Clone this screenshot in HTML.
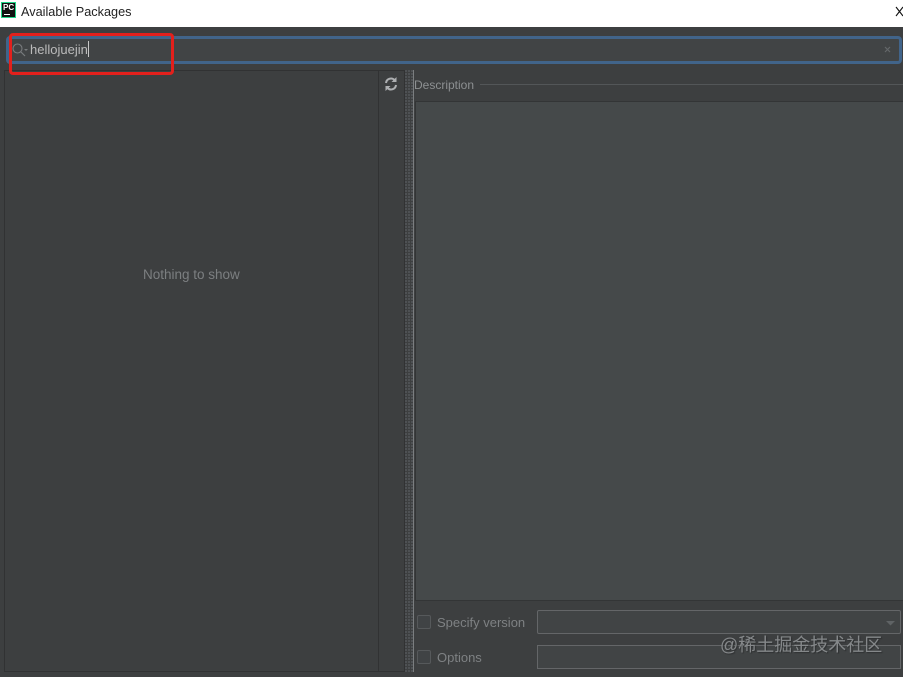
<!DOCTYPE html>
<html>
<head>
<meta charset="utf-8">
<style>
html,body{margin:0;padding:0;}
body{width:903px;height:677px;position:relative;overflow:hidden;background:#3d3f40;font-family:"Liberation Sans","Noto Sans CJK SC",sans-serif;}
div{position:absolute;box-sizing:border-box;}
svg{position:absolute;overflow:visible;}
.t{white-space:nowrap;color:#8a8d8f;font-size:13px;line-height:16px;}
#w{left:0;top:0;width:903px;height:677px;filter:blur(.35px);}
</style>
</head>
<body>
<div id="w">
<!-- title bar -->
<div style="left:0;top:0;width:903px;height:27px;background:#fff"></div>
<div style="left:1px;top:2px;width:15px;height:16px;background:#111;border:1px solid #21d789"></div>
<div style="left:3px;top:3px;font:bold 8px/9px 'Liberation Sans',sans-serif;color:#fff">PC</div>
<div style="left:4px;top:14px;width:6px;height:1px;background:#fff"></div>
<div class="t" style="left:21px;top:4px;color:#222;font-size:12.700px">Available Packages</div>
<svg style="left:0;top:0" width="903" height="27"><path d="M896 7l7 9M903 7l-7 9" stroke="#111" stroke-width="1.100" fill="none"/></svg>

<!-- search field -->
<div style="left:6px;top:36px;width:896px;height:28px;background:#414445;border:3px solid #41648a;border-radius:4px"></div>
<svg style="left:0;top:0" width="40" height="60"><circle cx="17.500" cy="48.500" r="4.500" stroke="#787b7d" stroke-width="1.100" fill="none"/><path d="M21 52l4 4" stroke="#787b7d" stroke-width="1.200"/><path d="M24 49h4l-2 2z" fill="#787b7d"/></svg>
<div class="t" style="left:30px;top:42px;color:#bbbbbb;font-size:13px">hellojuejin</div>
<div style="left:88px;top:41px;width:1px;height:16px;background:#c8c8c8"></div>
<svg style="left:0;top:0" width="903" height="60"><path d="M885 47l5 5M890 47l-5 5" stroke="#63676a" stroke-width="1.200"/></svg>

<!-- list panel -->
<div style="left:4px;top:70px;width:375px;height:602px;background:#3d3f40;border:1px solid #313233"></div>
<div class="t" style="left:143px;top:267px;color:#7c7f81;font-size:13.500px">Nothing to show</div>

<!-- toolbar -->
<div style="left:378px;top:70px;width:27px;height:602px;background:#3d3f40;border:1px solid #313233"></div>
<svg style="left:0;top:0" width="403" height="95" fill="none"><path d="M386 83a5 5 0 0 1 8.500-3M396 85a5 5 0 0 1-8.500 3" stroke="#aeb0b2" stroke-width="2"/><path d="M396.500 77v5h-5zM385.500 91v-5h5z" fill="#aeb0b2"/></svg>

<!-- splitter -->
<div style="left:405px;top:70px;width:8px;height:602px;background-image:radial-gradient(circle at 1px 1px,#54575a 0 1px,transparent 1px);background-size:3px 3px"></div>
<div style="left:413px;top:70px;width:1px;height:602px;background:#7b7e80"></div>

<!-- description -->
<div class="t" style="left:414px;top:77px;color:#8d9092;font-size:12px">Description</div>
<div style="left:480px;top:84px;width:423px;height:1px;background:#535658"></div>
<div style="left:415px;top:101px;width:488px;height:500px;background:#45494a;border-top:1px solid #333536;border-left:1px solid #333536;border-bottom:1px solid #333536"></div>

<!-- form -->
<div style="left:417px;top:615px;width:14px;height:14px;border:1px solid #56595b;border-radius:2px;background:#404345"></div>
<div class="t" style="left:437px;top:615px;color:#7e8183;font-size:13px">Specify version</div>
<div style="left:537px;top:610px;width:364px;height:24px;border:1px solid #646668;border-radius:2px;background:#414445"></div>
<svg style="left:0;top:0" width="903" height="677"><path d="M886 621h9l-4.500 4.500z" fill="#5f6365"/></svg>

<div style="left:417px;top:650px;width:14px;height:14px;border:1px solid #56595b;border-radius:2px;background:#404345"></div>
<div class="t" style="left:437px;top:650px;color:#7e8183;font-size:13px">Options</div>
<div style="left:537px;top:645px;width:364px;height:24px;border:1px solid #646668;background:#414445"></div>

<!-- watermark -->
<div class="t" style="left:720px;top:633px;color:#85888a;font-size:18px;line-height:24px;text-shadow:1px 1px 1px #2e3031">@稀土掘金技术社区</div>

<!-- red annotation -->
<div style="left:9px;top:33px;width:165px;height:42px;border:3px solid #e3201c;border-radius:4px"></div>
</div>
</body>
</html>
